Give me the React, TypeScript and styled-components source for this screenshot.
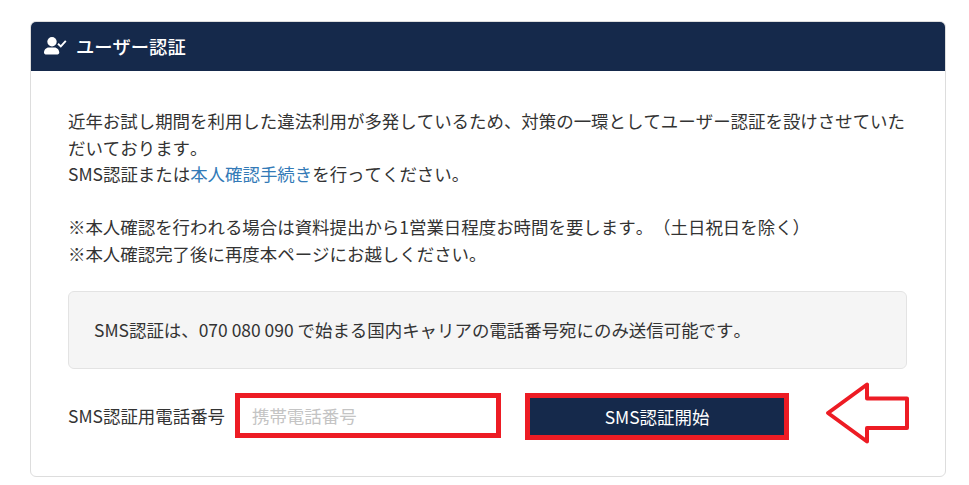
import { createGlobalStyle } from 'styled-components';
import styled from 'styled-components';

const GlobalStyle = createGlobalStyle`
    html, body {
        margin: 0;
        padding: 0;
        background: #fff;
    }
    body {
        font-family: 'Noto Sans CJK JP', 'Noto Sans', sans-serif;
        font-size: 17.45px;
        color: #333;
        text-spacing-trim: space-all;
        font-kerning: none;
    }
`;

const Page = styled.div`
    width: 969px;
    height: 485px;
    padding: 21px 23px 0 30px;
    box-sizing: border-box;
    overflow: hidden;
`;

const Card = styled.section`
    position: relative;
    height: 456px;
    box-sizing: border-box;
    border: 1px solid #ddd;
    border-radius: 6px;
    overflow: hidden;
`;

const CardHeader = styled.header`
    height: 49px;
    box-sizing: border-box;
    padding: 0 0 2px 13px;
    display: flex;
    align-items: center;
    gap: 9px;
    background: #15294b;
    color: #fff;
    font-size: 18.3px;
    font-weight: 500;
`;

const CardBody = styled.div`
    padding: 37px 37px 0;
`;

const Paragraph = styled.p`
    margin: 0;
    width: 839px;
    line-height: 26.6px;
`;

const Spacer = styled.div`
    height: 26.6px;
`;

const DocLink = styled.a`
    color: #337ab7;
    text-decoration: none;
`;

const Well = styled.div`
    margin-top: 23px;
    height: 78px;
    width: 839px;
    box-sizing: border-box;
    padding-left: 25px;
    display: flex;
    align-items: center;
    background: #f5f5f5;
    border: 1px solid #e3e3e3;
    border-radius: 6px;
`;

const FormRow = styled.form`
    margin-top: 24px;
    display: flex;
    align-items: flex-start;
`;

const FieldLabel = styled.label`
    width: 167px;
    height: 45px;
    display: flex;
    align-items: center;
    white-space: nowrap;
`;

const PhoneInput = styled.input`
    width: 266px;
    height: 45px;
    box-sizing: border-box;
    padding: 0 12px;
    border: 5px solid #ed1c24;
    outline: none;
    background: #fff;
    font-family: inherit;
    font-size: 17.45px;
    &::placeholder {
        color: #c4c4c4;
        opacity: 1;
    }
`;

const StartButton = styled.button`
    width: 264px;
    height: 47px;
    margin-left: 24px;
    box-sizing: border-box;
    border: 5px solid #ed1c24;
    background: #15294b;
    color: #fff;
    font-family: inherit;
    font-size: 17.45px;
    font-weight: 400;
    padding: 0;
`;

const Arrow = styled.svg`
    position: absolute;
    left: 790px;
    top: 357px;
`;

function UserCheckIcon() {
    return (
        <svg width="23" height="18" viewBox="0 0 23 18" fill="#fff" aria-hidden="true">
            <circle cx="8" cy="4.8" r="4.7" />
            <path d="M4.8 10.4h5.6c2.7 0 4.9 2.3 4.9 5.2 0 1-.8 1.8-1.8 1.8H1.7C.7 17.4 0 16.6 0 15.6c0-2.9 2.1-5.2 4.8-5.2z" />
            <path d="M14 6.8l2.8 2.6 5-5.6" fill="none" stroke="#fff" strokeWidth="1.9" />
        </svg>
    );
}

function App() {
    return (
        <Page>
            <GlobalStyle />
            <Card>
                <CardHeader>
                    <UserCheckIcon />
                    ユーザー認証
                </CardHeader>
                <CardBody>
                    <Paragraph>
                        近年お試し期間を利用した違法利用が多発しているため、対策の一環としてユーザー認証を設けさせていただいております。
                        <br />
                        SMS認証または<DocLink href="#">本人確認手続き</DocLink>を行ってください。
                    </Paragraph>
                    <Spacer />
                    <Paragraph>
                        ※本人確認を行われる場合は資料提出から1営業日程度お時間を要します。（土日祝日を除く）
                        <br />
                        ※本人確認完了後に再度本ページにお越しください。
                    </Paragraph>
                    <Well>SMS認証は、070 080 090 で始まる国内キャリアの電話番号宛にのみ送信可能です。</Well>
                    <FormRow>
                        <FieldLabel htmlFor="phone">SMS認証用電話番号</FieldLabel>
                        <PhoneInput id="phone" placeholder="携帯電話番号" />
                        <StartButton type="button">SMS認証開始</StartButton>
                    </FormRow>
                </CardBody>
                <Arrow width="90" height="66" viewBox="0 0 90 66" aria-hidden="true">
                    <path
                        d="M7 34L46 5.5V19.5H86V49H46V62.5Z"
                        fill="#fff"
                        stroke="#ed1c24"
                        strokeWidth="4"
                        strokeLinejoin="round"
                    />
                </Arrow>
            </Card>
        </Page>
    );
}

export default App;
